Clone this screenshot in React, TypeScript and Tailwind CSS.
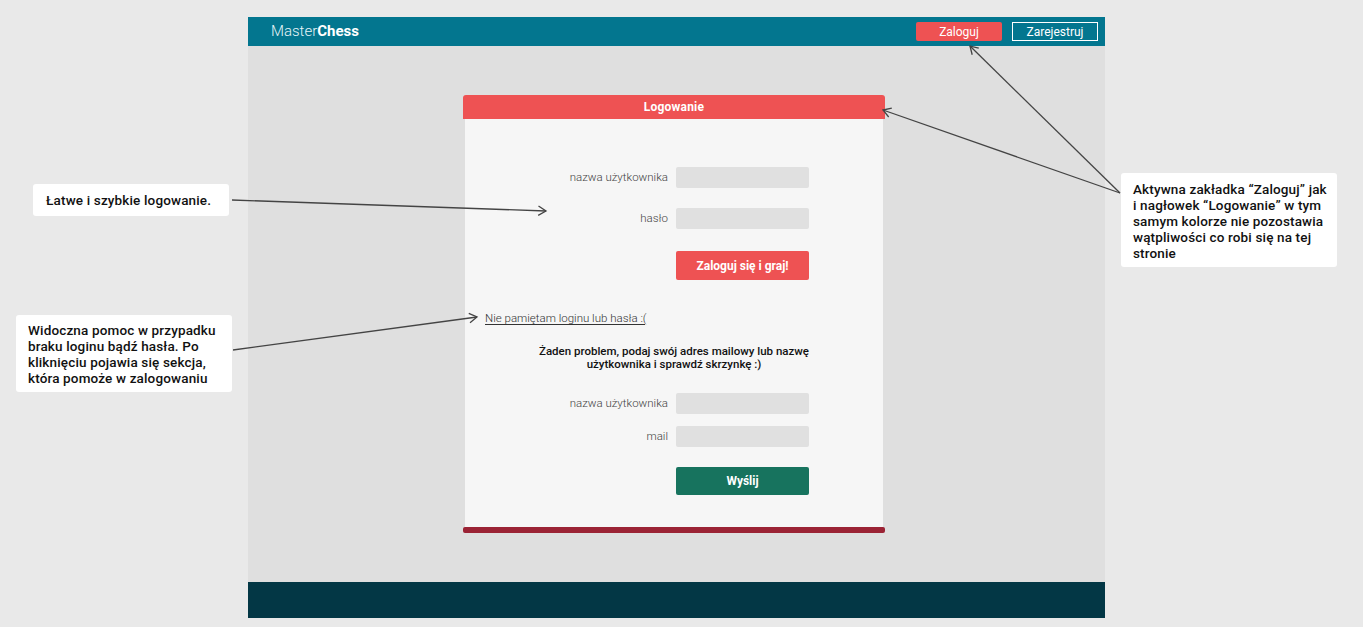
const font = { fontFamily: "Roboto, 'Noto Sans', sans-serif" };

const Field = ({ label }: { label: string }) => (
  <div className="flex items-center">
    <div className="w-[211px] pr-[8px] text-right text-[11.5px] font-light text-[#444]">{label}</div>
    <div className="h-[21px] w-[133px] rounded-[2px] bg-[#e0e0e0]"></div>
  </div>
);

const Note = ({ className, children }: { className: string; children: React.ReactNode }) => (
  <div className={"absolute whitespace-nowrap rounded-[3px] bg-white text-[13.5px] font-medium tracking-[0.15px] text-[#111] " + className}>
    {children}
  </div>
);

const arrowHead = (x: number, y: number, fx: number, fy: number) => {
  // open chevron at (x,y) pointing away from (fx,fy)
  const a = Math.atan2(y - fy, x - fx);
  const l = 9;
  const s = 0.55;
  const p1 = [x - l * Math.cos(a - s), y - l * Math.sin(a - s)];
  const p2 = [x - l * Math.cos(a + s), y - l * Math.sin(a + s)];
  return `${p1[0]},${p1[1]} ${x},${y} ${p2[0]},${p2[1]}`;
};

const arrows = [
  [232, 200, 546, 211],
  [233, 350, 477, 317],
  [1120, 193, 883, 110],
  [1120, 193, 970, 46],
];

export default function App() {
  return (
    <div className="relative h-[627px] w-full overflow-hidden bg-[#e9e9e9]" style={font}>
      <div className="ml-[248px] mt-[17px] flex h-[601px] w-[857px] flex-col bg-[#dfdfdf]">
        <header className="flex h-[29px] items-center justify-between bg-[#03768f] pl-[23px] pr-[7px]">
          <div className="text-[15px] text-[#e6f4f7]">
            <span className="font-light">Master</span>
            <span className="font-bold text-white">Chess</span>
          </div>
          <div className="flex items-center gap-[10px]">
            <button className="h-[19px] w-[86px] rounded-[2px] bg-[#ee5253] text-[12px] leading-none text-white">Zaloguj</button>
            <button className="h-[19px] w-[86px] border-[1.5px] border-white text-[12px] leading-none text-white">Zarejestruj</button>
          </div>
        </header>

        <main className="flex-1 pl-[215px] pt-[49px]">
          <div className="w-[422px]">
            <div className="flex h-[24px] items-center justify-center rounded-t-[3px] bg-[#ee5253] text-[12px] font-bold tracking-[0.2px] text-white">
              Logowanie
            </div>
            <div className="mx-[2px] flex flex-col bg-[#f6f6f6] pb-[32px] pt-[48px]">
              <Field label="nazwa użytkownika" />
              <div className="mt-[20px]">
                <Field label="hasło" />
              </div>
              <div className="ml-[211px] mt-[22px]">
                <button className="h-[29px] w-[133px] rounded-[2px] bg-[#ee5253] text-[12px] font-bold text-white">
                  Zaloguj się i graj!
                </button>
              </div>
              <a className="ml-[20px] mt-[30px] self-start text-[11.5px] font-light text-[#333] underline underline-offset-2">
                Nie pamiętam loginu lub hasła :(
              </a>
              <p className="mx-auto mt-[18px] w-[300px] text-center text-[11.5px] font-medium leading-[13px] text-[#111]">
                Żaden problem, podaj swój adres mailowy lub nazwę
                <br />
                użytkownika i sprawdź skrzynkę :)
              </p>
              <div className="mt-[22px]">
                <Field label="nazwa użytkownika" />
              </div>
              <div className="mt-[12px]">
                <Field label="mail" />
              </div>
              <div className="ml-[211px] mt-[20px]">
                <button className="h-[28px] w-[133px] rounded-[2px] bg-[#17735e] text-[12px] font-bold text-white">
                  Wyślij
                </button>
              </div>
            </div>
            <div className="h-[6px] rounded-[2px] bg-[#9b2335]"></div>
          </div>
        </main>

        <footer className="h-[36px] bg-[#033745]"></footer>
      </div>

      <Note className="left-[33px] top-[184px] flex h-[32px] w-[196px] items-center pl-[13px]">
        Łatwe i szybkie logowanie.
      </Note>
      <Note className="left-[16px] top-[315px] h-[77px] w-[216px] pl-[12px] pt-[7px] leading-[16px]">
        Widoczna pomoc w przypadku
        <br />
        braku loginu bądź hasła. Po
        <br />
        kliknięciu pojawia się sekcja,
        <br />
        która pomoże w zalogowaniu
      </Note>
      <Note className="left-[1121px] top-[173px] h-[94px] w-[216px] pl-[12px] pt-[8px] leading-[16px]">
        Aktywna zakładka “Zaloguj” jak
        <br />
        i nagłowek “Logowanie” w tym
        <br />
        samym kolorze nie pozostawia
        <br />
        wątpliwości co robi się na tej
        <br />
        stronie
      </Note>

      <svg className="pointer-events-none absolute left-0 top-0" width="1363" height="627">
        {arrows.map(([x1, y1, x2, y2], i) => (
          <g key={i} stroke="#444" strokeWidth="1.3" fill="none">
            <line x1={x1} y1={y1} x2={x2} y2={y2} />
            <polyline points={arrowHead(x2, y2, x1, y1)} />
          </g>
        ))}
      </svg>
    </div>
  );
}
